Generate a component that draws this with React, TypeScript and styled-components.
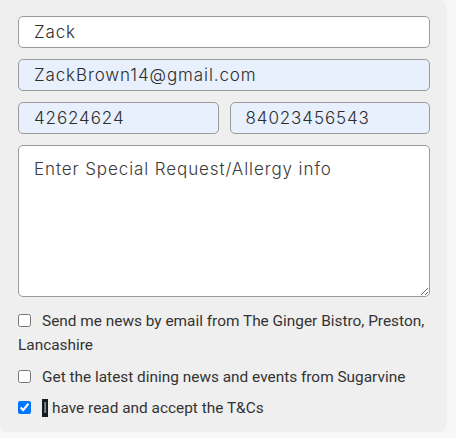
import React, { FC } from 'react';
import styled, { createGlobalStyle } from 'styled-components';

const GlobalStyle = createGlobalStyle`
  html, body {
    margin: 0;
    padding: 0;
    background-color: #f7f7f7;
  }
  * {
    box-sizing: border-box;
  }
`;

const Panel = styled.form`
  width: 447px;
  height: 432px;
  background-color: #efefef;
  border-radius: 0 8px 8px 8px;
  padding: 16px 17px 0 18px;
  display: flex;
  flex-direction: column;
  gap: 11px;
`;

const Field = styled.input<{ $filled?: boolean }>`
  width: 100%;
  height: 32px;
  border: 1px solid #9a9a9a;
  border-radius: 5px;
  padding: 0 15px;
  font-family: Inter, 'Open Sans', sans-serif;
  font-size: 17px;
  font-weight: 300;
  letter-spacing: 0.9px;
  color: #2d2d2d;
  background-color: ${p => (p.$filled ? '#e8f0fe' : '#ffffff')};
  outline: none;
`;

const Row = styled.div`
  display: grid;
  grid-template-columns: 1fr 1fr;
  gap: 11px;
`;

const Notes = styled.textarea`
  width: 100%;
  height: 152px;
  border: 1px solid #9a9a9a;
  border-radius: 5px;
  padding: 13px 15px;
  font-family: Inter, 'Open Sans', sans-serif;
  font-size: 17px;
  font-weight: 300;
  letter-spacing: 0.9px;
  color: #2d2d2d;
  background-color: #ffffff;
  resize: vertical;
  outline: none;
  &::placeholder {
    color: #3a3a3a;
  }
`;

const Options = styled.div`
  margin-top: 1px;
  display: flex;
  flex-direction: column;
  gap: 7.5px;
`;

const Option = styled.label`
  display: block;
  font-family: Roboto, 'Liberation Sans', sans-serif;
  font-size: 15.4px;
  line-height: 24px;
  color: #333333;
`;

const Box = styled.input`
  width: 13px;
  height: 13px;
  margin: 0 11px 0 0;
  vertical-align: -1px;
  accent-color: #0075ff;
`;

const Caret = styled.span`
  background-color: #1b1b1b;
  color: #9a9a9a;
  padding: 0 1px;
`;

const App: FC = () => {
  return (
    <>
      <GlobalStyle />
      <Panel>
        <Field defaultValue="Zack" />
        <Field $filled defaultValue="ZackBrown14@gmail.com" />
        <Row>
          <Field $filled defaultValue="42624624" />
          <Field $filled defaultValue="84023456543" />
        </Row>
        <Notes placeholder="Enter Special Request/Allergy info" />
        <Options>
          <Option>
            <Box type="checkbox" />
            Send me news by email from The Ginger Bistro, Preston, Lancashire
          </Option>
          <Option>
            <Box type="checkbox" />
            Get the latest dining news and events from Sugarvine
          </Option>
          <Option>
            <Box type="checkbox" defaultChecked />
            <Caret>I</Caret> have read and accept the T&amp;Cs
          </Option>
        </Options>
      </Panel>
    </>
  );
};

export default App;
